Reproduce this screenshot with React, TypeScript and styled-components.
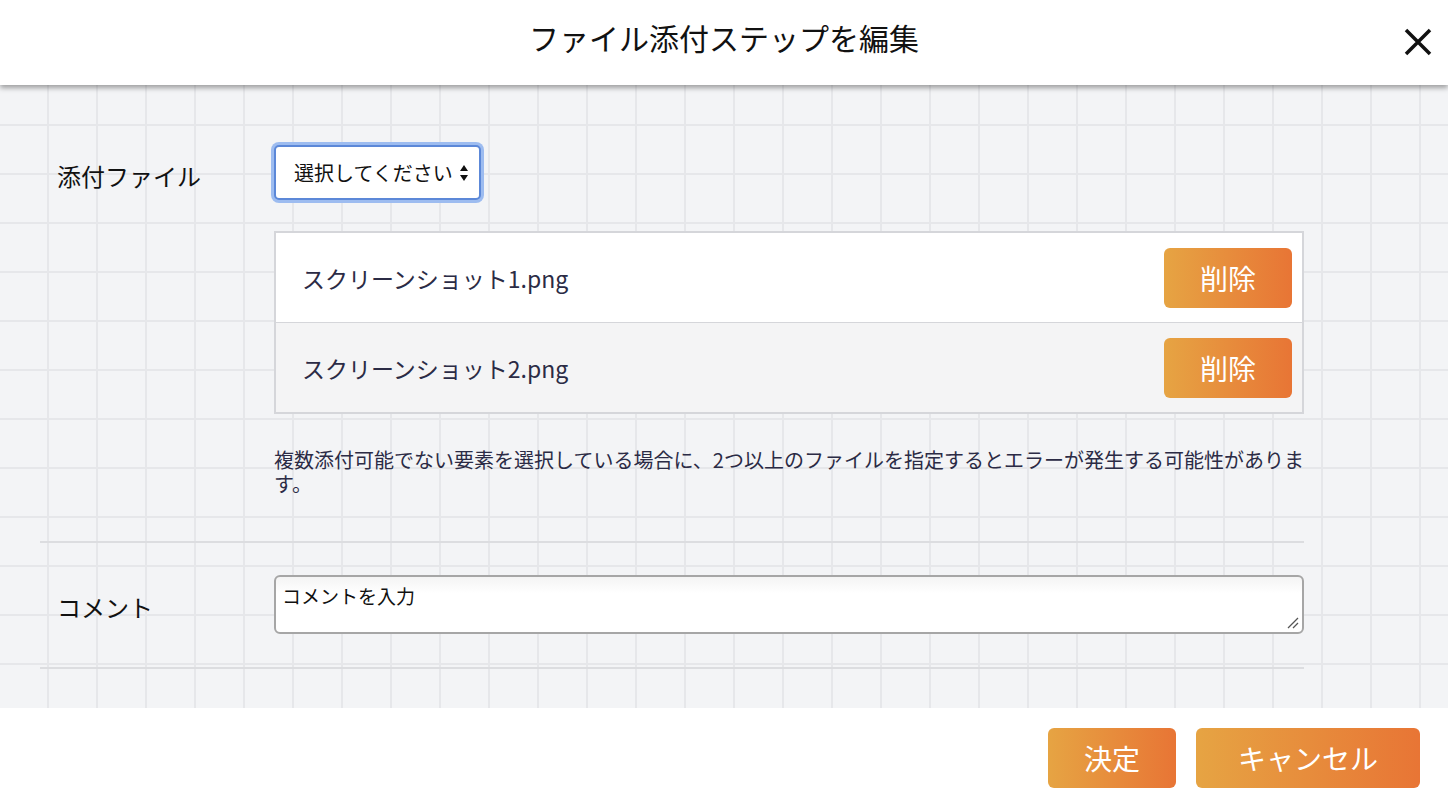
import React from 'react';
import styled, { createGlobalStyle } from 'styled-components';

const Global = createGlobalStyle`
  html, body { margin: 0; padding: 0; }
  body {
    font-family: "Noto Sans CJK JP", "Noto Sans", sans-serif;
    color: #222;
    background: #fff;
  }
`;

const Modal = styled.div`
  width: 1448px;
  height: 808px;
  display: flex;
  flex-direction: column;
  background: #fff;
`;

const Header = styled.header`
  height: 85px;
  flex-shrink: 0;
  display: flex;
  align-items: center;
  justify-content: center;
  position: relative;
  background: #fff;
  box-shadow: 0 3px 5px rgba(0, 0, 0, 0.35);
  z-index: 1;
`;

const Title = styled.h1`
  margin: 0 0 12px;
  font-size: 30px;
  font-weight: 400;
  color: #111;
`;

const Close = styled.button`
  position: absolute;
  right: 14px;
  top: 26px;
  border: none;
  background: none;
  padding: 0;
  cursor: pointer;
`;

const Body = styled.div`
  flex: 1;
  padding: 55px 144px 0 40px;
  background-color: #f3f4f6;
  background-image:
    repeating-linear-gradient(90deg, transparent 0 47px, #e6e7ea 47px 49px),
    repeating-linear-gradient(0deg, transparent 0 47px, #e6e7ea 47px 49px);
  background-position: 0 4px;
`;

const Section = styled.section`
  display: grid;
  grid-template-columns: 217px 1030px;
  align-items: start;
  padding: 0 0 0 17px;
  border-bottom: 2px solid #dcdde0;
`;

const Label = styled.div<{ $top: number }>`
  font-size: 24px;
  color: #111;
  padding-top: ${p => p.$top}px;
`;

const Field = styled.div<{ $pad: number }>`
  display: flex;
  flex-direction: column;
  padding-bottom: ${p => p.$pad}px;
`;

const Select = styled.div`
  align-self: flex-start;
  display: flex;
  align-items: center;
  gap: 6px;
  height: 51px;
  padding: 0 10px 0 18px;
  margin: 5px 0 0 0;
  background: #fff;
  border: 2px solid #5c88d8;
  border-radius: 5px;
  box-shadow: 0 0 0 3px #9dbcf0;
  font-size: 20px;
  color: #111;
`;

const FileList = styled.div`
  margin-top: 31px;
  border: 2px solid #d5d6da;
  background: #fff;
`;

const FileRow = styled.div<{ $alt?: boolean }>`
  height: 89px;
  display: flex;
  align-items: center;
  justify-content: space-between;
  padding: 0 10px 0 26px;
  background: ${p => (p.$alt ? '#f4f4f5' : '#fff')};
  & + & { border-top: 1px solid #d5d6da; }
  font-size: 23px;
  color: #2b2b45;
`;

const OrangeButton = styled.button<{ $w: number }>`
  width: ${p => p.$w}px;
  height: 60px;
  border: none;
  border-radius: 6px;
  background: linear-gradient(90deg, #e6a443, #e87535);
  color: #fff;
  font-family: inherit;
  font-size: 28px;
  cursor: pointer;
`;

const Note = styled.p`
  margin: 34px 0 0;
  font-size: 20px;
  line-height: 24px;
  color: #2b2b45;
`;

const TextArea = styled.div`
  height: 59px;
  border: 2px solid #a6a6a6;
  border-radius: 6px;
  background: linear-gradient(#f4f4f4, #fff 30%);
  padding: 8px 6px;
  box-sizing: border-box;
  font-size: 19px;
  color: #111;
  line-height: 22px;
  position: relative;
`;

const Grip = styled.svg`
  position: absolute;
  right: 3px;
  bottom: 3px;
`;

const Footer = styled.footer`
  height: 100px;
  flex-shrink: 0;
  display: flex;
  justify-content: flex-end;
  align-items: center;
  gap: 20px;
  padding-right: 28px;
  background: #fff;
`;

export default function App() {
  return (
    <>
      <Global />
      <Modal>
        <Header>
          <Title>ファイル添付ステップを編集</Title>
          <Close aria-label="閉じる">
            <svg width="32" height="32" viewBox="0 0 32 32">
              <path d="M4 4 L28 28 M28 4 L4 28" stroke="#111" strokeWidth="3.5" />
            </svg>
          </Close>
        </Header>
        <Body>
          <Section>
            <Label $top={18}>添付ファイル</Label>
            <Field $pad={45}>
              <Select>
                選択してください
                <svg width="10" height="18" viewBox="0 0 10 18">
                  <path d="M5 1 L9 7 H1 Z M5 17 L9 11 H1 Z" fill="#111" />
                </svg>
              </Select>
              <FileList>
                <FileRow>
                  スクリーンショット1.png
                  <OrangeButton $w={128}>削除</OrangeButton>
                </FileRow>
                <FileRow $alt>
                  スクリーンショット2.png
                  <OrangeButton $w={128}>削除</OrangeButton>
                </FileRow>
              </FileList>
              <Note>
                複数添付可能でない要素を選択している場合に、2つ以上のファイルを指定するとエラーが発生する可能性があります。
              </Note>
            </Field>
          </Section>
          <Section>
            <Label $top={46}>コメント</Label>
            <Field $pad={33}>
              <TextArea style={{ marginTop: 32 }}>
                コメントを入力
                <Grip width="12" height="12" viewBox="0 0 12 12">
                  <path d="M11 1 L1 11 M11 6 L6 11" stroke="#555" strokeWidth="1.3" />
                </Grip>
              </TextArea>
            </Field>
          </Section>
        </Body>
        <Footer>
          <OrangeButton $w={128}>決定</OrangeButton>
          <OrangeButton $w={224}>キャンセル</OrangeButton>
        </Footer>
      </Modal>
    </>
  );
}
